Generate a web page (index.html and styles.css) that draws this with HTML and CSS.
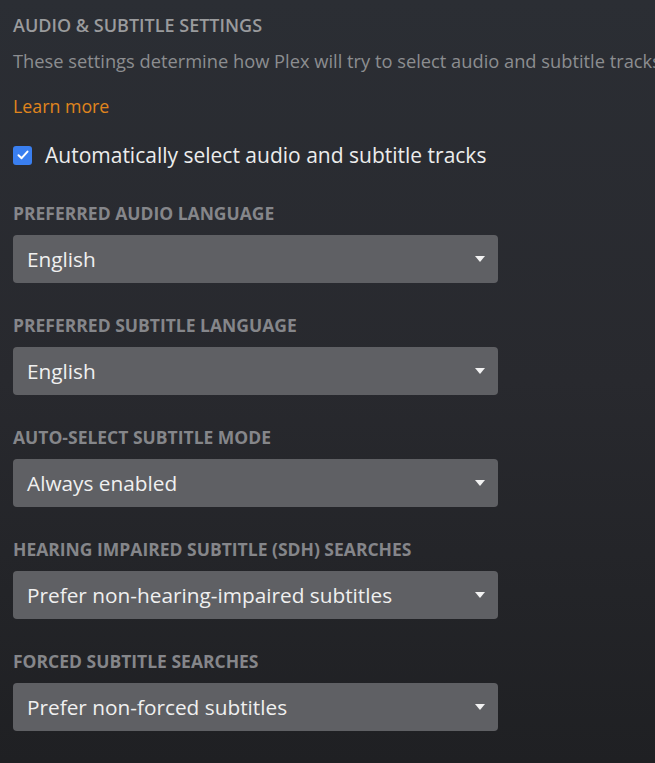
FILE: index.html
```html
<!DOCTYPE html>
<html lang="en">
<head>
<meta charset="utf-8">
<title>Audio &amp; Subtitle Settings</title>
<link rel="stylesheet" href="styles.css">
</head>
<body>
<main class="page">
  <h2 class="title">AUDIO &amp; SUBTITLE SETTINGS</h2>
  <p class="desc">These settings determine how Plex will try to select audio and subtitle tracks.</p>
  <a class="learn" href="#">Learn more</a>
  <label class="check">
    <span class="box"><svg width="12" height="10" viewBox="0 0 12 10"><path d="M1.5 5.2 L4.6 8.2 L10.5 1.6" fill="none" stroke="#fff" stroke-width="2" stroke-linecap="round" stroke-linejoin="round"/></svg></span>
    <span class="check-text">Automatically select audio and subtitle tracks</span>
  </label>

  <div class="group">
    <div class="label">PREFERRED AUDIO LANGUAGE</div>
    <div class="select"><span>English</span><span class="caret"></span></div>
  </div>
  <div class="group">
    <div class="label">PREFERRED SUBTITLE LANGUAGE</div>
    <div class="select"><span>English</span><span class="caret"></span></div>
  </div>
  <div class="group">
    <div class="label">AUTO-SELECT SUBTITLE MODE</div>
    <div class="select"><span>Always enabled</span><span class="caret"></span></div>
  </div>
  <div class="group">
    <div class="label">HEARING IMPAIRED SUBTITLE (SDH) SEARCHES</div>
    <div class="select"><span>Prefer non-hearing-impaired subtitles</span><span class="caret"></span></div>
  </div>
  <div class="group">
    <div class="label">FORCED SUBTITLE SEARCHES</div>
    <div class="select"><span>Prefer non-forced subtitles</span><span class="caret"></span></div>
  </div>
</main>
</body>
</html>
```

FILE: styles.css
```css
html, body {
  margin: 0;
  padding: 0;
  height: 100%;
}
body {
  background: linear-gradient(180deg, #2b2e34 0%, #28292e 50%, #1f2023 100%);
  font-family: "Open Sans", "Noto Sans", sans-serif;
  overflow: hidden;
}
.page {
  padding: 13px 0 0 13px;
  width: 642px;
  overflow: hidden;
}
.title {
  margin: 0;
  font-size: 18px;
  font-weight: 600;
  line-height: 24px;
  color: #9a9b9d;
}
.desc {
  margin: 12px 0 0;
  font-size: 18.3px;
  line-height: 24px;
  color: #8c8d90;
  white-space: nowrap;
}
.learn {
  display: block;
  margin-top: 21px;
  font-size: 17.8px;
  line-height: 24px;
  color: #e0851d;
  text-decoration: none;
  width: max-content;
}
.check {
  display: flex;
  align-items: center;
  gap: 13px;
  margin-top: 23px;
  height: 28px;
}
.box {
  width: 19px;
  height: 19px;
  border-radius: 3px;
  background: #3a7ff0;
  display: flex;
  align-items: center;
  justify-content: center;
  flex: none;
}
.check-text {
  font-size: 21px;
  line-height: 28px;
  color: #ececec;
}
.group {
  margin-top: 33px;
  width: 485px;
}
.group + .group {
  margin-top: 31px;
}
.label {
  font-size: 17.5px;
  font-weight: 700;
  line-height: 22px;
  color: #85868a;
  margin-bottom: 11px;
}
.select {
  height: 48px;
  border-radius: 4px;
  background: #5f6064;
  display: flex;
  align-items: center;
  justify-content: space-between;
  padding: 0 13px 0 14px;
  box-sizing: border-box;
  font-size: 20.8px;
  color: #f0f0f0;
}
.caret {
  width: 0;
  height: 0;
  border-left: 5.5px solid transparent;
  border-right: 5.5px solid transparent;
  border-top: 6px solid #f2f2f2;
}
```
